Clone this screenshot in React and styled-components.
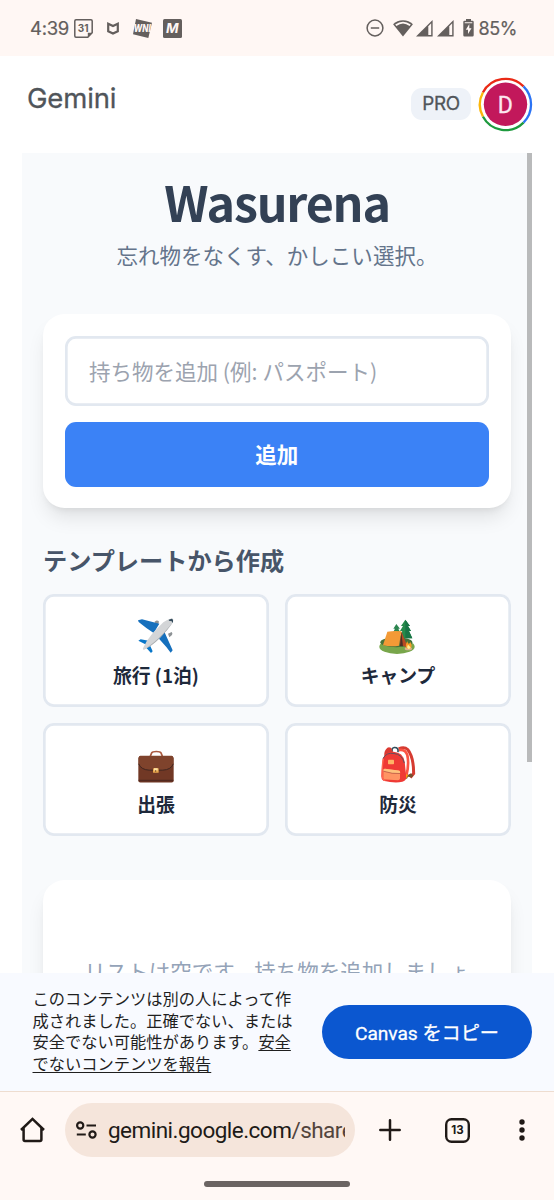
import React, { useState } from 'react'
import styled, { createGlobalStyle } from 'styled-components'

const GlobalStyle = createGlobalStyle`
  * {
    box-sizing: border-box;
  }
  body {
    margin: 0;
    background: #fff;
    font-family: 'Noto Sans CJK JP', sans-serif;
  }
  button, input {
    font-family: inherit;
  }
`

//layout
const Screen = styled.div`
  display: flex;
  flex-direction: column;
  width: 554px;
  height: 1200px;
  overflow: hidden;
`

const StatusBar = styled.div`
  display: flex;
  justify-content: space-between;
  height: 56px;
  flex: none;
  padding: 0 38px 0 30px;
  background: #fff7f4;
  color: #645f5d;
`

const StatusGroup = styled.div`
  display: flex;
  align-items: center;
  height: 56px;
`

const StatusText = styled.span`
  font-family: Inter, sans-serif;
  font-size: ${(p) => p.$size}px;
  letter-spacing: ${(p) => p.$spacing || 0}px;
  width: ${(p) => p.$width}px;
  white-space: nowrap;
  -webkit-text-stroke: 0.2px #645f5d;
`

const Glyph = styled.svg`
  display: block;
  flex: none;
  overflow: visible;
  margin-left: ${(p) => p.$left || 0}px;
`

const Header = styled.header`
  display: flex;
  justify-content: space-between;
  height: 97px;
  flex: none;
  padding: 22px 22px 0 27px;
`

const Brand = styled.div`
  font-family: Inter, sans-serif;
  font-size: 27.5px;
  line-height: 40px;
  letter-spacing: -0.15px;
  color: #50555a;
  -webkit-text-stroke: 0.3px #50555a;
`

const Account = styled.div`
  display: flex;
  align-items: center;
  height: 53px;
  gap: 8px;
`

const Plan = styled.span`
  width: 60px;
  height: 32px;
  margin-bottom: 1px;
  border-radius: 11px;
  background: #eef2f8;
  color: #50555a;
  font: 400 18.8px/32px Inter, sans-serif;
  letter-spacing: -0.3px;
  text-align: center;
  -webkit-text-stroke: 0.3px #50555a;
`

const Frame = styled.main`
  display: flex;
  flex: none;
  height: 820px;
  margin: 0 22px;
  background: #f8fafc;
  overflow: hidden;
`

const Content = styled.div`
  width: 505px;
  flex: none;
  padding: 19px 16px 0 21px;
`

const Scrollbar = styled.div`
  width: 5px;
  height: 609px;
  background: #b9babb;
`

const Title = styled.h1`
  width: 468px;
  margin: 0;
  font-size: 48.4px;
  line-height: 58px;
  font-weight: 700;
  letter-spacing: -1.2px;
  color: #334155;
  text-align: center;
`

const Tagline = styled.p`
  width: 468px;
  margin: 9px 0 0;
  font-size: 21.5px;
  line-height: 32px;
  color: #64748b;
  text-align: center;
`

const Card = styled.section`
  display: flex;
  flex-direction: column;
  width: 467.5px;
  height: ${(p) => p.$height}px;
  margin-top: ${(p) => p.$top}px;
  padding: ${(p) => p.$padding};
  gap: 16px;
  border-radius: 21.5px;
  background: #fff;
  box-shadow: 0 13px 20px -4px rgba(0, 0, 0, 0.1),
    0 5px 8px -5px rgba(0, 0, 0, 0.1);
`

const Input = styled.input`
  height: 70px;
  flex: none;
  padding: 0 24.5px 2px;
  border: none;
  border-radius: 11px;
  box-shadow: inset 0 0 0 2.7px #e2e8f0;
  font-size: 21.5px;
  outline: none;
  &::placeholder {
    color: #9ca3af;
    opacity: 1;
  }
`

const AddButton = styled.button`
  height: 64.5px;
  flex: none;
  padding: 0 0 2px;
  border: none;
  border-radius: 11px;
  background: #3b82f6;
  color: #fff;
  font-size: 21.5px;
  font-weight: 700;
`

const SectionTitle = styled.h2`
  margin: 34px 0 16px;
  font-size: 24.2px;
  line-height: 36px;
  font-weight: 700;
  color: #475569;
`

const Templates = styled.div`
  display: grid;
  grid-template-columns: 226px 226px;
  grid-auto-rows: 113px;
  gap: 16px;
`

const TemplateButton = styled.button`
  display: flex;
  flex-direction: column;
  align-items: center;
  padding: 22.3px 0 0;
  border: none;
  border-radius: 11px;
  background: #fff;
  box-shadow: inset 0 0 0 2.7px #e2e8f0;
  color: #1e293b;
  font-size: 18.8px;
  line-height: 27px;
  font-weight: 700;
  gap: 4.7px;
`

const EmptyText = styled.p`
  margin: 0;
  font-size: 21.5px;
  line-height: 32px;
  color: #94a3b8;
  text-align: center;
  white-space: nowrap;
`

const Notice = styled.footer`
  display: flex;
  justify-content: space-between;
  height: 118px;
  flex: none;
  padding: 15px 22px 0 32.5px;
  background: #f8faff;
`

const NoticeText = styled.p`
  width: 264px;
  margin: 0;
  font-size: 16.25px;
  line-height: 21.5px;
  color: #1f1f1f;
  white-space: nowrap;
`

const ReportLink = styled.span`
  text-decoration: underline;
  text-underline-offset: 2px;
`

const CopyButton = styled.button`
  width: 210px;
  height: 54px;
  margin-top: 17px;
  padding: 0 0 1px;
  border: none;
  border-radius: 27px;
  background: #0b57d0;
  color: #fff;
  font-family: Roboto, 'Noto Sans CJK JP', sans-serif;
  font-size: 19.2px;
  font-weight: 400;
  letter-spacing: -0.05px;
  -webkit-text-stroke: 0.3px #fff;
`

const BrowserBar = styled.nav`
  flex: none;
  height: 109px;
  border-top: 1px solid #eeddd0;
  background: #fff8f5;
  color: #201a17;
`

const Tools = styled.div`
  display: flex;
  align-items: center;
  height: 54px;
  margin-top: 11px;
  padding-left: 20px;
`

const AddressBar = styled.div`
  display: flex;
  align-items: center;
  width: 290px;
  height: 54px;
  margin-left: 20px;
  padding-left: 11px;
  border-radius: 27px;
  background: #f5e5db;
`

const Url = styled.span`
  width: 237px;
  margin-left: 11px;
  overflow: hidden;
  white-space: nowrap;
  font: 22.5px/34px Roboto, sans-serif;
  letter-spacing: -0.52px;
  span {
    color: #52443c;
  }
`

const TabCount = styled.div`
  width: 25px;
  height: 25px;
  margin-left: 44px;
  box-shadow: inset 0 0 0 2.4px #201a17;
  border-radius: 6.5px;
  font: 700 11.5px/25px Inter, sans-serif;
  text-align: center;
`

const GestureBar = styled.div`
  width: 146px;
  height: 5.5px;
  margin: 24px auto 0;
  border-radius: 3px;
  background: #6b6462;
`

//status icons
const CalendarIcon = () => (
  <Glyph $left={5} width='19' height='19' viewBox='0 0 19 19'>
    <path d='M2 .8h15q1.2 0 1.2 1.2v11.8l-4.4 4.4H2Q.8 18.2.8 17V2Q.8.8 2 .8Z' fill='none' stroke='currentColor' strokeWidth='1.5' />
    <path d='M18.2 13.8h-4.4v4.4Z' fill='currentColor' />
    <text x='9.1' y='13' textAnchor='middle' fontFamily='Inter' fontSize='10' fontWeight='700' fill='currentColor'>31</text>
  </Glyph>
)

const ShieldIcon = () => (
  <Glyph $left={14} width='12' height='13' viewBox='0 0 12 13'>
    <path d='M1.2 1.7 6 4l4.8-2.3v7.5L6 11.6 1.2 9.2Z' fill='none' stroke='currentColor' strokeWidth='2.2' />
  </Glyph>
)

const NewsIcon = () => (
  <Glyph $left={14} width='19' height='19' viewBox='0 0 19 19'>
    <path d='m3 0 16 3.7L15.3 19 0 15.2Z' fill='currentColor' />
    <text x='.8' y='13.4' fontFamily='Inter' fontStyle='italic' fontSize='10' fontWeight='800' fill='#fff7f4' textLength='17' lengthAdjust='spacingAndGlyphs'>WNI</text>
  </Glyph>
)

const MIcon = () => (
  <Glyph $left={11} width='19' height='19' viewBox='0 0 19 19'>
    <rect width='19' height='19' rx='1.5' fill='currentColor' />
    <text x='9.3' y='14.3' textAnchor='middle' fontFamily='Inter' fontStyle='italic' fontSize='13.5' fontWeight='700' fill='#fff7f4'>M</text>
  </Glyph>
)

const DndIcon = () => (
  <Glyph width='18' height='18' viewBox='0 0 18 18' fill='none' stroke='currentColor' strokeWidth='1.5'>
    <circle cx='9' cy='9' r='7.9' />
    <path d='M4.8 9h8.4' />
  </Glyph>
)

const WifiIcon = () => (
  <Glyph $left={9} width='20' height='17' viewBox='0 0 20 17'>
    <path d='M10 .3C6 .3 2.7 1.7.1 4.2L10 16.5 19.9 4.2C17.3 1.7 14 .3 10 .3Z' fill='currentColor' />
    <path d='M2.2 4.6Q10-1.3 17.8 4.6L16.6 6Q10 .9 3.4 6Z' fill='#fff7f4' />
  </Glyph>
)

const SignalIcon = ({ left }) => (
  <Glyph $left={left} width='17' height='17' viewBox='0 0 17 17'>
    <path d='M0 16.5 16.6 0v16.5Z' fill='currentColor' />
    <path d='M12.3 6.2 15.2 3.3v11.8h-2.9Z' fill='#fff7f4' />
  </Glyph>
)

const BatteryIcon = () => (
  <Glyph $left={9} width='11' height='18' viewBox='0 0 11 18'>
    <path d='M3 0h5v1.8h1.5q1.2 0 1.2 1.2v13.3q0 1.2-1.2 1.2h-8Q.3 17.5.3 16.3V3q0-1.2 1.2-1.2H3Z' fill='currentColor' />
    <path d='M1.7 3.2h7.6v1H1.7ZM6.3 5 2.8 10.7H5V15l3.5-5.8H6.3Z' fill='#fff7f4' />
  </Glyph>
)

const Avatar = () => (
  <Glyph width='53' height='53' viewBox='0 0 53 53'>
    <g fill='none' strokeWidth='2.3'>
      <path d='M3.9 14.5A25.5 25.5 0 0 1 44.5 8.4' stroke='#ea2a16' />
      <path d='M44.5 8.4A25.5 25.5 0 0 1 44.5 44.6' stroke='#2b73f4' />
      <path d='M44.5 44.6A25.5 25.5 0 0 1 3.9 38.5' stroke='#1e9a3e' />
      <path d='M3.9 38.5A25.5 25.5 0 0 1 3.9 14.5' stroke='#fbb60b' />
    </g>
    <circle cx='26.5' cy='26.3' r='21.7' fill='#c2185b' />
    <text x='26.3' y='34.6' textAnchor='middle' fontFamily='Roboto' fontSize='23' fontWeight='400' fill='#fce7ef' stroke='#fce7ef' strokeWidth='.3'>D</text>
  </Glyph>
)

//template pictures
const Plane = () => (
  <Glyph width='40' height='40' viewBox='48 51 120 120'>
    <path d='m103 69 5-4q7-1 9 3l-4 12Zm41 35 11-5q4 4 1 9l-8 7Z' fill='#8d9295' />
    <path d='m54 64 12-3 52 13-17 28-22-15-23-18Zm78 32 26 58-6 7-13-17-26-29Z' fill='#1670bd' />
    <path d='m55 125 7-4 24 4-7 12Zm32 8 11 24-5 5-17-19Z' fill='#0876c9' />
    <path d='M151 59q10-5 9 6-2 9-14 22l-26 29q-22 23-48 36-5 1-3-4 10-24 30-47l31-31q10-8 21-11Z' fill='#d3d5d7' />
    <path d='M157 72q-14 22-38 46-22 22-47 34 34-23 57-48Z' fill='#a6aaad' />
    <path d='m146 62 9-3 4 3v11l-4-6-8-2Z' fill='#334b5c' />
  </Glyph>
)

const Camp = () => (
  <Glyph width='40' height='40' viewBox='54 51 120 120'>
    <ellipse cx='111' cy='143' rx='53' ry='22' fill='#78a64b' />
    <ellipse cx='109' cy='130' rx='48' ry='15' fill='#47733a' />
    <path d='m136 62-13 19h6l-9 15h7l-10 22h40l-10-22h6l-9-15h6Z' fill='#268b4b' />
    <path d='m109 75-9 14h5l-8 15h26l-8-15h5Z' fill='#2c8550' />
    <path d='M136 62v56h21l-10-22h6l-9-15h6Z' fill='#187546' />
    <path d='m124 97 17 42-4 5-18-8Z' fill='#b84a22' />
    <path d='m124 99-4 42 9 1Z' fill='#4c2e27' />
    <path d='M82 98q22-4 42-1l-7 43q-24 4-48-1Z' fill='#f39a36' />
    <ellipse cx='145' cy='149' rx='11' ry='5' fill='#d8b293' />
    <path d='M142 127q1 7 5 8l4-6q7 12 1 19-6 4-12 0-6-9 2-21Z' fill='#fb9b25' />
    <path d='m144 137 8 8q-1 5-6 5-8-3-2-13Z' fill='#fff09a' />
  </Glyph>
)

const Briefcase = () => (
  <Glyph width='40' height='40' viewBox='48 34.5 120 120'>
    <path d='m91 68 4-10q2-4 14-4t14 4l4 10' fill='none' stroke='#aa593f' strokeWidth='5' />
    <rect x='55' y='69' width='106' height='78' rx='6' fill='#713825' />
    <path d='M61 67h94q5 0 5 6v18q-7 18-32 19H88q-26-3-32-19V73q0-6 5-6Z' fill='#7f432c' />
    <path d='M56 91q7 18 32 19h40q25-1 32-19' fill='none' stroke='#402620' strokeWidth='3' />
    <path d='M56 141h104' stroke='#522a20' strokeWidth='5' />
    <rect x='99' y='104' width='17' height='14' rx='2' fill='#e9a84e' />
    <path d='M102 104h11v7h-11Z' fill='#ffe0a0' />
    <path d='M107 110v5' stroke='#76512c' strokeWidth='3' />
  </Glyph>
)

const Backpack = () => (
  <Glyph width='40' height='40' viewBox='54 32.5 120 120'>
    <path d='M116 44q17-7 27 2 18 22 18 72l-10 12' fill='none' stroke='#d63b31' strokeWidth='9' />
    <path d='M116 48q20-4 26 15 6 26-3 62' fill='none' stroke='#fb5444' strokeWidth='8' />
    <path d='m136 126 17-9 7 7-5 6-11-2-3 6-7-1Z' fill='#74512f' />
    <path d='m136 118 8 6-5 8-8-2Z' fill='#ffb000' />
    <path d='M97 53q-4-11 6-13 13-1 11 14' fill='none' stroke='#314e5b' strokeWidth='5' />
    <path d='M78 45q6-9 15-4l7 17-26 13q-4-16 4-26Z' fill='#dc3931' />
    <path d='M68 75q9-24 33-22 28 2 33 30l5 46q0 9-12 14-23 5-57-3-7-5-6-17Z' fill='#ef3a35' />
    <path d='M69 73q10-19 33-15 24 2 31 29' fill='none' stroke='#654e59' strokeWidth='3' />
    <path d='M70 74q-5 25-3 53 1 10 9 12' fill='none' stroke='#ff6951' strokeWidth='4' />
    <rect x='84' y='77' width='18' height='13' rx='2' fill='#ffb466' />
    <path d='M70 107q0-3 4-3l40 5q6 0 6 6v18q-1 5-6 5l-38-2q-5 0-6-5Z' fill='#ff9464' />
    <path d='M70 111q0-7 5-7l41 5q6 1 4 10-22 0-50-8Z' fill='#ffc17c' />
    <path d='M70 111q28 9 50 7' fill='none' stroke='#a7423a' strokeWidth='2' />
  </Glyph>
)

const templates = [
  { name: '旅行 (1泊)', Icon: Plane },
  { name: 'キャンプ', Icon: Camp },
  { name: '出張', Icon: Briefcase },
  { name: '防災', Icon: Backpack },
]

const PackingForm = () => {
  const [value, setValue] = useState('')

  return (
    <Card $top={43} $height={194} $padding='22px 21.5px'>
      <Input
        type='text'
        value={value}
        onChange={(e) => setValue(e.target.value)}
        placeholder='持ち物を追加 (例: パスポート)'
      />
      <AddButton onClick={() => setValue('')}>追加</AddButton>
    </Card>
  )
}

const BrowserTools = () => (
  <Tools>
    <Glyph width='25' height='26' viewBox='0 0 25 26' fill='none' stroke='currentColor' strokeWidth='2.5'>
      <path d='M1 13 12.5 1.9 24 13M3.6 11v11.6q0 1.4 1.4 1.4h15q1.4 0 1.4-1.4V11' />
    </Glyph>
    <AddressBar>
      <Glyph width='21' height='18' viewBox='0 0 21 18' fill='none' stroke='currentColor' strokeWidth='2.2'>
        <circle cx='4.2' cy='4.5' r='3.1' />
        <path d='M10.5 4.5h9.5M.8 13.5h9' />
        <circle cx='16.5' cy='13.5' r='3.1' />
      </Glyph>
      <Url>
        gemini.google.com<span>/share</span>
      </Url>
    </AddressBar>
    <Glyph $left={24} width='22' height='22' viewBox='0 0 22 22' stroke='currentColor' strokeWidth='2.5' strokeLinecap='round'>
      <path d='M1.3 11h19.4M11 1.3v19.4' />
    </Glyph>
    <TabCount>13</TabCount>
    <Glyph $left={49} width='6' height='22' viewBox='0 0 6 22' fill='currentColor'>
      <circle cx='3' cy='3' r='2.7' />
      <circle cx='3' cy='11' r='2.7' />
      <circle cx='3' cy='19' r='2.7' />
    </Glyph>
  </Tools>
)

const App = () => (
  <>
    <GlobalStyle />
    <Screen>
      <StatusBar>
        <StatusGroup>
          <StatusText $size={18.5} $width={39} $spacing={-0.3}>4:39</StatusText>
          <CalendarIcon />
          <ShieldIcon />
          <NewsIcon />
          <MIcon />
        </StatusGroup>
        <StatusGroup>
          <DndIcon />
          <WifiIcon />
          <SignalIcon left={3} />
          <SignalIcon left={4} />
          <BatteryIcon />
          <StatusText $size={18} $width={42} $spacing={-0.5}>&nbsp;85%</StatusText>
        </StatusGroup>
      </StatusBar>
      <Header>
        <Brand>Gemini</Brand>
        <Account>
          <Plan>PRO</Plan>
          <Avatar />
        </Account>
      </Header>
      <Frame>
        <Content>
          <Title>Wasurena</Title>
          <Tagline>忘れ物をなくす、かしこい選択。</Tagline>
          <PackingForm />
          <SectionTitle>テンプレートから作成</SectionTitle>
          <Templates>
            {templates.map(({ name, Icon }) => (
              <TemplateButton key={name}>
                <Icon />
                {name}
              </TemplateButton>
            ))}
          </Templates>
          <Card $top={44} $height={240} $padding='75px 0 0'>
            <EmptyText>リストは空です。持ち物を追加しましょ</EmptyText>
          </Card>
        </Content>
        <Scrollbar />
      </Frame>
      <Notice>
        <NoticeText>
          このコンテンツは別の人によって作
          <br />
          成されました。正確でない、または
          <br />
          安全でない可能性があります。<ReportLink>安全</ReportLink>
          <br />
          <ReportLink>でないコンテンツを報告</ReportLink>
        </NoticeText>
        <CopyButton>Canvas をコピー</CopyButton>
      </Notice>
      <BrowserBar>
        <BrowserTools />
        <GestureBar />
      </BrowserBar>
    </Screen>
  </>
)

export default App
